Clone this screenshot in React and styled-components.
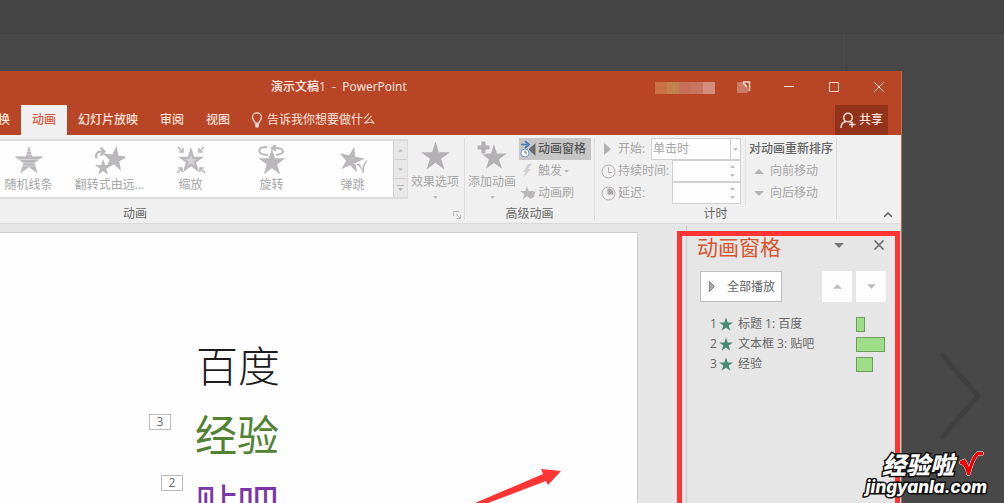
import React from "react";
import styled, { createGlobalStyle } from "styled-components";

const GlobalStyle = createGlobalStyle`
  * {
    box-sizing: border-box;
  }
  body {
    margin: 0;
    background: #484848;
    font-family: "Open Sans", "Noto Sans CJK SC", sans-serif;
    font-size: 12px;
    line-height: 16px;
  }
  button,
  input,
  select {
    font: inherit;
    color: inherit;
    margin: 0;
    padding: 0;
    border: none;
    border-radius: 0;
    background: none;
  }
  svg {
    display: block;
    flex: none;
  }
`;

const STAR = "12,0 14.8,8.8 24,8.8 16.6,14.2 19.4,23 12,17.6 4.6,23 7.4,14.2 0,8.8 9.2,8.8";

const Page = styled.div`
  position: relative;
  display: flex;
  flex-direction: column;
  height: 100vh;
  overflow: hidden;
`;
const TopStrip = styled.div`
  flex: none;
  height: 34px;
  background: #444444;
  border-bottom: 1px solid #414141;
`;
const SubStrip = styled.div`
  flex: none;
  height: 37px;
  margin-right: 157px;
  border-right: 1px solid #424242;
`;
const AppWindow = styled.main`
  position: relative;
  flex: 1;
  min-height: 0;
  display: flex;
  flex-direction: column;
  margin-right: 102px;
  background: #e6e6e6;
  border-right: 1px solid #c8674c;
  overflow: hidden;
`;

const TitleBar = styled.header`
  flex: none;
  display: flex;
  align-items: center;
  height: 32px;
  padding-left: 271px;
  color: #fbe9e4;
  background: #b84626;
`;
const Title = styled.h1`
  margin: 0 auto 0 0;
  font-size: 12px;
  font-weight: 500;
  white-space: pre;
`;
const Mosaic = styled.div`
  display: flex;
  margin: 2px 6px 0 0;
`;
const MosaicCell = styled.span`
  width: 12px;
  height: 12px;
  background: ${(props) => props.$color};
`;
const WindowButton = styled.button`
  display: flex;
  align-items: center;
  justify-content: center;
  width: 45px;
  height: 32px;
`;

const TabBar = styled.nav`
  flex: none;
  display: flex;
  height: 32px;
  padding-top: 2px;
  color: #fbe3dc;
  background: #b84626;
`;
const Tab = styled.button`
  padding: 0 11px;
  font-weight: 500;
  color: ${(props) => (props.$active ? "#d2593c" : "inherit")};
  background: ${(props) => (props.$active ? "#f0f0f0" : "none")};
  &:first-child {
    margin-left: -13px;
  }
`;
const TellMe = styled.button`
  display: flex;
  align-items: center;
  gap: 4px;
  margin: 0 auto 0 10px;
`;
const Share = styled.button`
  display: flex;
  align-items: center;
  justify-content: center;
  gap: 3px;
  width: 53px;
  margin-right: 13px;
  font-weight: 500;
  background: #93331a;
`;

const Ribbon = styled.section`
  flex: none;
  display: flex;
  height: 89px;
  padding: 3px 0;
  color: #a6a6a6;
  background: #f0f0f0;
  border-bottom: 1px solid #dadada;
`;
const Group = styled.div`
  position: relative;
  display: flex;
  flex-direction: column;
  width: ${(props) => props.$width}px;
  border-right: 1px solid #dcdcdc;
`;
const GroupBody = styled.div`
  flex: none;
  display: flex;
  height: 68px;
`;
const GroupLabel = styled.div`
  color: #666666;
  text-align: center;
  padding-right: ${(props) => props.$shift || 0}px;
`;
const GroupCaption = styled.span`
  margin: 4px 0 6px;
`;
const Launcher = styled.button`
  position: absolute;
  right: 3px;
  bottom: 1px;
`;
const Gallery = styled.div`
  display: flex;
  flex: none;
  width: 408px;
  height: 60px;
  margin-top: 1px;
  border: 2px solid #dcdcdc;
  border-width: 2px 1px 2px 0;
  background: #fefefe;
  overflow: hidden;
`;
const GalleryItem = styled.button`
  display: flex;
  flex: none;
  flex-direction: column;
  align-items: center;
  gap: 2px;
  width: 81px;
  padding-top: 4px;
  white-space: nowrap;
  &:first-child {
    margin-left: -12px;
  }
`;
const Scroller = styled.div`
  flex: 1;
  display: grid;
  grid-template-rows: repeat(3, 1fr);
  gap: 1px;
  background: #d0d0d0;
  border-left: 1px solid #d0d0d0;
`;
const ScrollButton = styled.button`
  display: flex;
  align-items: center;
  justify-content: center;
  background: #e8e8e8;
`;
const BigButton = styled.button`
  display: flex;
  flex-direction: column;
  align-items: center;
  width: 54px;
  height: 64px;
  padding-top: 3px;
  white-space: nowrap;
`;
const ToolColumn = styled.div`
  display: grid;
  grid-template-rows: repeat(3, 22px);
`;
const ToolButton = styled.button`
  display: flex;
  align-items: center;
  gap: 2px;
  width: 72px;
  padding-left: 1px;
  font-weight: ${(props) => (props.$pressed ? 500 : 400)};
  color: ${(props) => (props.$pressed ? "#555555" : "inherit")};
  background: ${(props) => (props.$pressed ? "#c6c6c6" : "none")};
`;
const Field = styled.div`
  display: flex;
  align-items: center;
  width: 140px;
`;
const FieldLabel = styled.label`
  display: flex;
  align-items: center;
  gap: 2px;
  margin-right: auto;
  white-space: nowrap;
`;
const TimingColumn = styled.div`
  display: grid;
  grid-template-rows: repeat(3, 22px);
  margin-left: 6px;
`;
const Combo = styled.div`
  position: relative;
  width: 90px;
  height: 22px;
  border: 1px solid #d0d0d0;
  background: #fdfdfd;
`;
const Select = styled.select`
  width: 100%;
  height: 20px;
  padding-left: 1px;
  appearance: none;
`;
const ComboArrow = styled.span`
  position: absolute;
  top: 0;
  right: 0;
  display: flex;
  align-items: center;
  justify-content: center;
  width: 10px;
  height: 20px;
  border-left: 1px solid #d0d0d0;
  pointer-events: none;
`;
const Spin = styled.div`
  display: flex;
  width: 69px;
  height: 22px;
  border: 1px solid #d0d0d0;
  background: #fdfdfd;
`;
const SpinInput = styled.input`
  flex: 1;
  min-width: 0;
`;
const SpinArrows = styled.span`
  display: flex;
  flex-direction: column;
  justify-content: space-between;
  width: 10px;
  padding: 4px 0;
`;
const Reorder = styled.div`
  display: grid;
  grid-template-rows: repeat(3, 22px);
  align-items: center;
  margin-left: 4px;
  padding-left: 3px;
  border-left: 1px solid #e2e2e2;
  white-space: nowrap;
`;
const ReorderTitle = styled.span`
  font-weight: 500;
  color: #666666;
`;
const ReorderButton = styled.button`
  display: flex;
  align-items: center;
  gap: 6px;
  padding-left: 5px;
`;
const Collapse = styled.button`
  margin: auto 9px 2px auto;
`;

const Workspace = styled.div`
  flex: 1;
  min-height: 0;
  display: flex;
`;
const Slide = styled.section`
  flex: 1;
  min-width: 0;
  margin: 8px 48px 0 0;
  padding-top: 96px;
  background: #fefefe;
  border: 1px solid #cccccc;
  border-width: 1px 1px 0 0;
`;
const SlideLine = styled.div`
  display: flex;
  align-items: flex-start;
  height: 69px;
  padding-left: ${(props) => props.$indent}px;
`;
const SlideText = styled.p`
  margin: 0 0 0 ${(props) => props.$gap || 0}px;
  font-family: "Noto Sans CJK SC", sans-serif;
  font-size: 42px;
  line-height: 69px;
  font-weight: ${(props) => props.$weight};
  color: ${(props) => props.$color};
`;
const OrderTag = styled.span`
  width: 22px;
  height: 16px;
  margin-top: ${(props) => props.$top}px;
  line-height: 14px;
  text-align: center;
  color: #6a6a6a;
  border: 1px solid #bdbdbd;
`;

const Pane = styled.aside`
  flex: none;
  width: 215px;
  margin-top: 2px;
  padding: 9px 15px 0 10px;
  color: #666666;
  border-left: 1px solid #c8c8c8;
`;
const PaneHeader = styled.div`
  display: flex;
  align-items: center;
  height: 24px;
  padding-right: 1px;
`;
const PaneTitle = styled.h2`
  margin: 0 auto 0 0;
  font-size: 21px;
  line-height: 24px;
  font-weight: 400;
  color: #d6552f;
`;
const PaneIcon = styled.button`
  margin: 0 0 4px 29px;
`;
const PaneTools = styled.div`
  display: flex;
  gap: 4px;
  margin: 12px 0 12px 3px;
`;
const PlayButton = styled.button`
  display: flex;
  align-items: center;
  gap: 12px;
  width: 82px;
  height: 31px;
  margin-right: auto;
  padding-left: 8px;
  background: #fdfdfd;
  border: 1px solid #bfbfbf;
`;
const MoveButton = styled.button`
  display: flex;
  align-items: center;
  justify-content: center;
  width: 30px;
  height: 31px;
  background: #fdfdfd;
`;
const EffectList = styled.ol`
  margin: 0;
  padding: 0 0 0 13px;
  list-style: none;
`;
const Effect = styled.li`
  display: flex;
  align-items: center;
  height: 20px;
`;
const EffectOrder = styled.span`
  width: 9px;
`;
const EffectName = styled.span`
  margin-left: 5px;
`;
const Track = styled.span`
  width: 30px;
  margin-left: auto;
`;
const Bar = styled.span`
  display: block;
  height: 15px;
  background: #9fdd88;
  border: 1px solid #6d9f5b;
`;

const Highlight = styled.div`
  position: absolute;
  top: 160px;
  right: 1px;
  bottom: -8px;
  width: 223px;
  border: 5px solid #ff3535;
  pointer-events: none;
`;
const Arrow = styled.svg`
  position: absolute;
  left: 470px;
  bottom: 0;
`;
const NextArrow = styled.svg`
  position: absolute;
  right: 22px;
  top: 350px;
`;
const Watermark = styled.div`
  position: absolute;
  right: 17px;
  bottom: 6px;
  display: flex;
  flex-direction: column;
  align-items: flex-end;
  color: #ffffff;
  paint-order: stroke fill;
  -webkit-text-stroke: 3px #111111;
`;
const WatermarkName = styled.div`
  display: flex;
  align-items: center;
  gap: 4px;
  height: 26px;
  padding-right: 3px;
  font-family: "Noto Sans CJK SC", sans-serif;
  font-size: 24px;
  font-style: italic;
  line-height: 24px;
  font-weight: 900;
`;
const WatermarkSite = styled.div`
  font-family: Inter, sans-serif;
  font-size: 17px;
  font-style: italic;
  line-height: 20px;
  font-weight: 800;
`;

function Triangle({ dir = "down", size = 5, color = "#b4b4b4" }) {
  const points = {
    up: "0,5 5,0 10,5",
    down: "0,0 10,0 5,5",
  };
  return (
    <svg width={size} height={Math.ceil(size / 2)} viewBox="0 0 10 5">
      <polygon points={points[dir]} fill={color} />
    </svg>
  );
}

function Star({ size, color = "#b2b0b3" }) {
  return (
    <svg width={size} height={size} viewBox="0 0 24 23">
      <polygon points={STAR} fill={color} />
    </svg>
  );
}

function EffectIcon({ kind }) {
  return (
    <svg width="30" height="30" viewBox="0 0 30 30" fill="#bab8bb" stroke="none">
      {kind === "lines" && (
        <>
          <polygon points={STAR} transform="translate(1.500 2) scale(1.12)" stroke="#bab8bb" strokeWidth=".6" />
          <path
            d="M8 6.500h14M8 9.500h14M0 14.500h30M0 18h30M0 21h30"
            stroke="#fefefe"
            strokeOpacity=".5"
            strokeWidth=".8"
          />
        </>
      )}
      {kind === "flip" && (
        <>
          <polygon points={STAR} transform="translate(9 -1) rotate(8) scale(1.06)" />
          <polygon points={STAR} transform="translate(0 14) scale(.68)" />
          <path d="M1.500 13.500C0 8 3 6 9 6.500M5.500 2.500l4 4-4 4" fill="none" stroke="#bab8bb" strokeWidth="2.200" />
        </>
      )}
      {kind === "zoom" && (
        <>
          <polygon points={STAR} transform="translate(1.800 2) scale(1.1)" />
          <polygon points={STAR} transform="translate(9 9.500) scale(.5)" fill="#d8d3da" />
          <path
            d="M2 2l5 5M7 3v4H3M28 2l-5 5M23 3v4h4M1 28l5-5M2 23h4v4M29 28l-5-5M28 23h-4v4"
            fill="none"
            stroke="#bab8bb"
            strokeWidth="1.600"
          />
        </>
      )}
      {kind === "spin" && (
        <>
          <polygon points={STAR} transform="translate(1.500 3.500) scale(1.12)" />
          <path
            d="M11 10C-1 9 0 2 10 2M19 10c10-1 9-7-1-7h-4M19 0l-4 3 4 3"
            fill="none"
            stroke="#bab8bb"
            strokeWidth="2"
          />
        </>
      )}
      {kind === "bounce" && (
        <>
          <polygon points={STAR} transform="translate(3.500 -1) rotate(12) scale(1.08)" />
          <path
            d="M16 18.500l6 0 2 5c1-5 3-8 7-9-4 4-5 8-5 14h-1.500c-1-5-4-8-8-10z"
            stroke="#fefefe"
            strokeWidth=".6"
          />
        </>
      )}
    </svg>
  );
}

function Clock({ filled }) {
  return (
    <svg width="15" height="15" viewBox="0 0 15 15" fill="none" stroke="#b5aeb6">
      <circle cx="7.500" cy="7.500" r="6.500" />
      {filled ? (
        <path d="M7.500 7.500V3.500a4 4 0 0 1 4 4z" fill="#aaa4ab" stroke="#aaa4ab" strokeWidth="2" />
      ) : (
        <path d="M7.500 3.500V8.500H11" />
      )}
    </svg>
  );
}

function SpinBox({ id }) {
  return (
    <Spin>
      <SpinInput id={id} type="text" />
      <SpinArrows>
        <Triangle dir="up" />
        <Triangle />
      </SpinArrows>
    </Spin>
  );
}

const galleryItems = [
  { kind: "lines", name: "随机线条" },
  { kind: "flip", name: "翻转式由远..." },
  { kind: "zoom", name: "缩放" },
  { kind: "spin", name: "旋转" },
  { kind: "bounce", name: "弹跳" },
];

const effects = [
  { name: "标题 1: 百度", width: 9 },
  { name: "文本框 3: 贴吧", width: 29 },
  { name: "经验", width: 17 },
];

const tabs = ["换", "动画", "幻灯片放映", "审阅", "视图"];
const mosaic = ["#c87345", "#c4814e", "#c7705a", "#c9745f", "#d48d7c"];

function Header() {
  return (
    <>
      <TitleBar>
        <Title>演示文稿1  -  PowerPoint</Title>
        <Mosaic>
          {mosaic.map((color) => (
            <MosaicCell key={color} $color={color} />
          ))}
        </Mosaic>
        <WindowButton aria-label="功能区显示选项">
          <svg width="14" height="14" viewBox="0 0 14 14">
            <path d="M0 2h8l4 8-2 3H0z" fill="#cb7a66" />
            <path d="M6 2h6.500v9M6 3l4 4" fill="none" stroke="#f4d6cd" strokeWidth="1.500" />
          </svg>
        </WindowButton>
        <WindowButton aria-label="最小化">
          <svg width="10" height="10" viewBox="0 0 10 10" stroke="#f4d6cd">
            <path d="M0 4.500h10" />
          </svg>
        </WindowButton>
        <WindowButton aria-label="最大化">
          <svg width="10" height="10" viewBox="0 0 10 10" stroke="#f4d6cd" fill="none">
            <path d="M.5.5h9v9h-9z" />
          </svg>
        </WindowButton>
        <WindowButton aria-label="关闭">
          <svg width="10" height="10" viewBox="0 0 10 10" stroke="#f4d6cd">
            <path d="M0 0l10 10M10 0L0 10" />
          </svg>
        </WindowButton>
      </TitleBar>
      <TabBar>
        {tabs.map((name) => (
          <Tab key={name} $active={name === "动画"}>
            {name}
          </Tab>
        ))}
        <TellMe>
          <svg width="12" height="16" viewBox="0 0 12 16" fill="none" stroke="#fbe3dc" strokeWidth="1.200">
            <path d="M4 11C4 9 1.500 8 1.500 5.300a4.500 4.500 0 0 1 9 0C10.500 8 8 9 8 11z" />
            <path d="M4 12.500h4M4.500 14.500h3" strokeWidth="2" />
          </svg>
          告诉我你想要做什么
        </TellMe>
        <Share>
          <svg width="16" height="17" viewBox="0 0 16 17" fill="none" stroke="#f6dcd4" strokeWidth="1.500">
            <circle cx="8" cy="5.500" r="4.300" />
            <path d="M1 16c0-4 2-6 5-6.500M9.500 9.500l2 1.500M12 9.500v6M9 12.500h6.500" />
          </svg>
          共享
        </Share>
      </TabBar>
    </>
  );
}

function AnimationRibbon() {
  return (
    <Ribbon>
      <Group $width={465}>
        <GroupBody>
          <Gallery>
            {galleryItems.map((item) => (
              <GalleryItem key={item.kind}>
                <EffectIcon kind={item.kind} />
                {item.name}
              </GalleryItem>
            ))}
            <Scroller>
              <ScrollButton aria-label="上一行">
                <Triangle dir="up" />
              </ScrollButton>
              <ScrollButton aria-label="下一行">
                <Triangle />
              </ScrollButton>
              <ScrollButton aria-label="其他">
                <svg width="7" height="7" viewBox="0 0 7 7" fill="#b4b4b4">
                  <path d="M0 0h7v1H0zM1 3h5L3.500 6z" />
                </svg>
              </ScrollButton>
            </Scroller>
          </Gallery>
          <BigButton>
            <Star size={29} />
            <GroupCaption>效果选项</GroupCaption>
            <Triangle />
          </BigButton>
        </GroupBody>
        <GroupLabel $shift={194}>动画</GroupLabel>
        <Launcher aria-label="更多动画选项">
          <svg width="8" height="8" viewBox="0 0 8 8" fill="none" stroke="#b4b4b4">
            <path d="M.5 5V.5H6M3 3l4 4M7.500 4v3.500H4" />
          </svg>
        </Launcher>
      </Group>

      <Group $width={130}>
        <GroupBody>
          <BigButton>
            <svg width="30" height="29" viewBox="0 0 30 29" fill="#b2b0b3">
              <polygon points={STAR} transform="translate(4 3) scale(1.08)" />
              <path d="M4 0h5v4h4v5H9v4H4V9H0V4h4z" stroke="#f0f0f0" />
            </svg>
            <GroupCaption>添加动画</GroupCaption>
            <Triangle />
          </BigButton>
          <ToolColumn>
            <ToolButton $pressed aria-pressed="true">
              <svg width="16" height="17" viewBox="0 0 16 17" fill="none">
                <path d="M15.500 2v13L9 9V8z" fill="#6b6b6b" />
                <path d="M1 3.500h6M5 0l4 3.500L5 7" stroke="#3f7dbb" strokeWidth="1.700" />
                <circle cx="5" cy="12" r="4" fill="#fdfdfd" stroke="#6b9ac4" />
                <path d="M5 9.500V12h2" stroke="#55779a" />
              </svg>
              动画窗格
            </ToolButton>
            <ToolButton>
              <svg width="16" height="16" viewBox="0 0 16 16">
                <path d="M8 1h4L8 6h3L3 15l2.500-6H3z" fill="#d3cdd4" />
              </svg>
              触发
              <Triangle />
            </ToolButton>
            <ToolButton>
              <svg width="16" height="16" viewBox="0 0 16 16" fill="#b9b6ba">
                <polygon points={STAR} transform="translate(0 1) scale(.58)" />
                <path d="M10 8l5.500-2-1.500 6-3 1.500-3-2z" />
              </svg>
              动画刷
            </ToolButton>
          </ToolColumn>
        </GroupBody>
        <GroupLabel>高级动画</GroupLabel>
      </Group>

      <Group $width={242}>
        <GroupBody>
          <TimingColumn>
            <Field>
              <FieldLabel htmlFor="start">
                <svg width="15" height="12" viewBox="0 0 15 12">
                  <path d="M3 0l7 6-7 6z" fill="#b0b0b0" />
                </svg>
                开始:
              </FieldLabel>
              <Combo>
                <Select id="start">
                  <option>单击时</option>
                </Select>
                <ComboArrow>
                  <Triangle />
                </ComboArrow>
              </Combo>
            </Field>
            <Field>
              <FieldLabel htmlFor="duration">
                <Clock />
                持续时间:
              </FieldLabel>
              <SpinBox id="duration" />
            </Field>
            <Field>
              <FieldLabel htmlFor="delay">
                <Clock filled />
                延迟:
              </FieldLabel>
              <SpinBox id="delay" />
            </Field>
          </TimingColumn>
          <Reorder>
            <ReorderTitle>对动画重新排序</ReorderTitle>
            <ReorderButton>
              <Triangle dir="up" size={10} />
              向前移动
            </ReorderButton>
            <ReorderButton>
              <Triangle size={10} />
              向后移动
            </ReorderButton>
          </Reorder>
        </GroupBody>
        <GroupLabel>计时</GroupLabel>
      </Group>

      <Collapse aria-label="折叠功能区">
        <svg width="8" height="6" viewBox="0 0 8 6" fill="none" stroke="#6a6a6a" strokeWidth="1.600">
          <path d="M0 5l4-4 4 4" />
        </svg>
      </Collapse>
    </Ribbon>
  );
}

function AnimationPane() {
  return (
    <Pane>
      <PaneHeader>
        <PaneTitle>动画窗格</PaneTitle>
        <PaneIcon aria-label="任务窗格选项">
          <Triangle size={10} color="#777777" />
        </PaneIcon>
        <PaneIcon aria-label="关闭窗格">
          <svg width="12" height="10" viewBox="0 0 12 10" stroke="#707070" strokeWidth="1.700">
            <path d="M1.500.5l9 9M10.500.5l-9 9" />
          </svg>
        </PaneIcon>
      </PaneHeader>
      <PaneTools>
        <PlayButton>
          <svg width="6" height="11" viewBox="0 0 6 11">
            <path d="M.5.5l5 5-5 5z" fill="#a8a8a8" stroke="#8a8a8a" />
          </svg>
          全部播放
        </PlayButton>
        <MoveButton aria-label="上移">
          <Triangle dir="up" size={9} color="#bcbcbc" />
        </MoveButton>
        <MoveButton aria-label="下移">
          <Triangle size={9} color="#bcbcbc" />
        </MoveButton>
      </PaneTools>
      <EffectList>
        {effects.map((effect, i) => (
          <Effect key={effect.name}>
            <EffectOrder>{i + 1}</EffectOrder>
            <Star size={14} color="#478a74" />
            <EffectName>{effect.name}</EffectName>
            <Track>
              <Bar style={{ width: effect.width }} />
            </Track>
          </Effect>
        ))}
      </EffectList>
    </Pane>
  );
}

function App() {
  return (
    <Page>
      <GlobalStyle />
      <TopStrip />
      <SubStrip />
      <AppWindow>
        <Header />
        <AnimationRibbon />
        <Workspace>
          <Slide>
            <SlideLine $indent={196}>
              <SlideText $weight={300} $color="#1c1c1c">
                百度
              </SlideText>
            </SlideLine>
            <SlideLine $indent={149}>
              <OrderTag $top={16}>3</OrderTag>
              <SlideText $gap={24} $weight={400} $color="#548235">
                经验
              </SlideText>
            </SlideLine>
            <SlideLine $indent={161}>
              <OrderTag $top={8}>2</OrderTag>
              <SlideText $gap={12} $weight={400} $color="#7a36a8">
                贴吧
              </SlideText>
            </SlideLine>
          </Slide>
          <AnimationPane />
        </Workspace>
        <Arrow width="96" height="40" viewBox="0 0 96 40">
          <polygon points="5,40 73,11 71,6 91,8 78,22 76,18 18,40" fill="#ff3535" />
        </Arrow>
        <Highlight />
      </AppWindow>
      <NextArrow width="44" height="92" viewBox="0 0 44 92">
        <path d="M4 5l36 41L4 87" fill="none" stroke="#404040" strokeWidth="5" strokeLinecap="round" />
      </NextArrow>
      <Watermark>
        <WatermarkName>
          经验啦
          <svg width="26" height="26" viewBox="0 0 26 26">
            <path
              d="M2 10l5-2 4 8C13 9 16 3 19 1h6v3h-4c-4 3-7 11-9 20H9C8 18 6 13 2 13z"
              fill="#f00000"
              stroke="#ffffff"
              strokeWidth="1"
            />
          </svg>
        </WatermarkName>
        <WatermarkSite>jingyanla.com</WatermarkSite>
      </Watermark>
    </Page>
  );
}

export default App;
